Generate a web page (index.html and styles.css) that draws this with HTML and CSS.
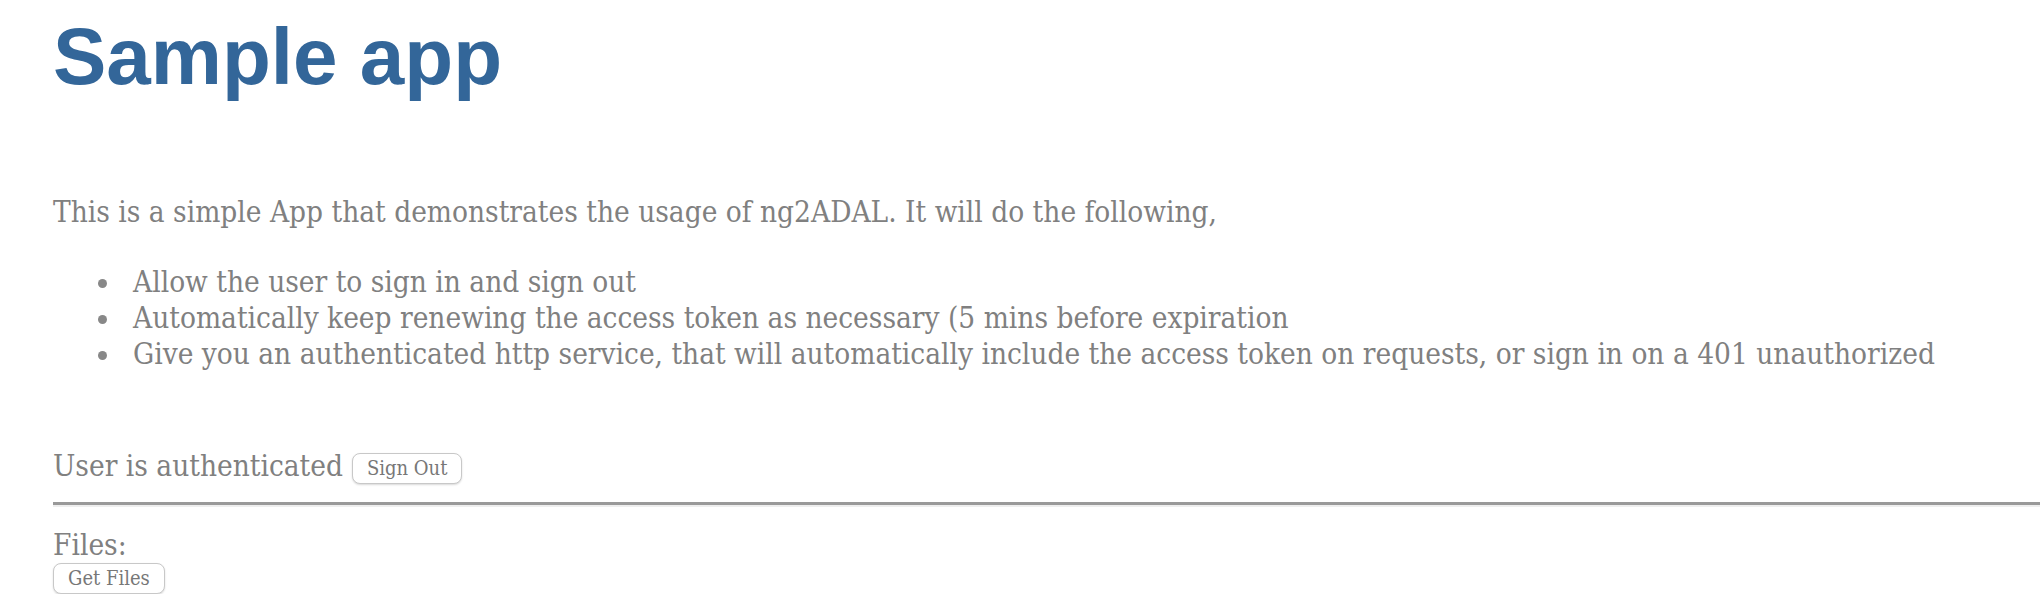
FILE: index.html
```html
<!DOCTYPE html>
<html lang="en">
<head>
<meta charset="utf-8">
<title>Sample app</title>
<link rel="stylesheet" href="styles.css">
</head>
<body>
<div class="page">
  <h1 class="title">Sample app</h1>
  <p class="intro">This is a simple App that demonstrates the usage of ng2ADAL. It will do the following,</p>
  <ul class="features">
    <li>Allow the user to sign in and sign out</li>
    <li>Automatically keep renewing the access token as necessary (5 mins before expiration</li>
    <li>Give you an authenticated http service, that will automatically include the access token on requests, or sign in on a 401 unauthorized</li>
  </ul>
  <div class="auth">User is authenticated <button class="btn btn-inline">Sign Out</button></div>
  <hr class="divider">
  <div class="files">
    <div class="files-label">Files:</div>
    <button class="btn">Get Files</button>
  </div>
</div>
</body>
</html>
```

FILE: styles.css
```css
html, body {
  margin: 0;
  padding: 0;
  background: #ffffff;
}

.page {
  padding: 11px 0 0 53px;
  font-family: "DejaVu Serif Condensed", "DejaVu Serif", serif;
  font-stretch: condensed;
  font-size: 29.5px;
  line-height: 36px;
  color: #808080;
}

.title {
  margin: 0;
  font-family: "Liberation Sans", Arial, sans-serif;
  font-weight: bold;
  font-size: 80px;
  line-height: 92px;
  color: #336699;
}

.intro {
  margin: 91px 0 0 0;
}

.features {
  margin: 34px 0 0 0;
  padding-left: 80px;
  list-style: none;
}

.features li::before {
  content: "";
  display: inline-block;
  width: 9px;
  height: 9px;
  border-radius: 50%;
  background: #888888;
  margin-left: -35px;
  margin-right: 26px;
  vertical-align: 4px;
}

.auth {
  margin-top: 76px;
  display: flex;
  align-items: center;
  gap: 9px;
}

.btn {
  font-family: "DejaVu Serif Condensed", "DejaVu Serif", serif;
  font-stretch: condensed;
  font-size: 20px;
  color: #777777;
  background: #ffffff;
  border: 1px solid #c8c8c8;
  border-radius: 8px;
  box-shadow: 0 1px 2px rgba(0, 0, 0, 0.15);
  padding: 0 14px;
  height: 31px;
  line-height: 29px;
}

.btn-inline {
  margin-top: 5px;
}

.divider {
  margin: 18px 0 0 0;
  border: 0;
  border-top: 3px solid #999999;
  border-bottom: 2px solid #eeeeee;
  height: 0;
}

.files {
  margin-top: 20px;
  display: flex;
  flex-direction: column;
  align-items: flex-start;
}
```
